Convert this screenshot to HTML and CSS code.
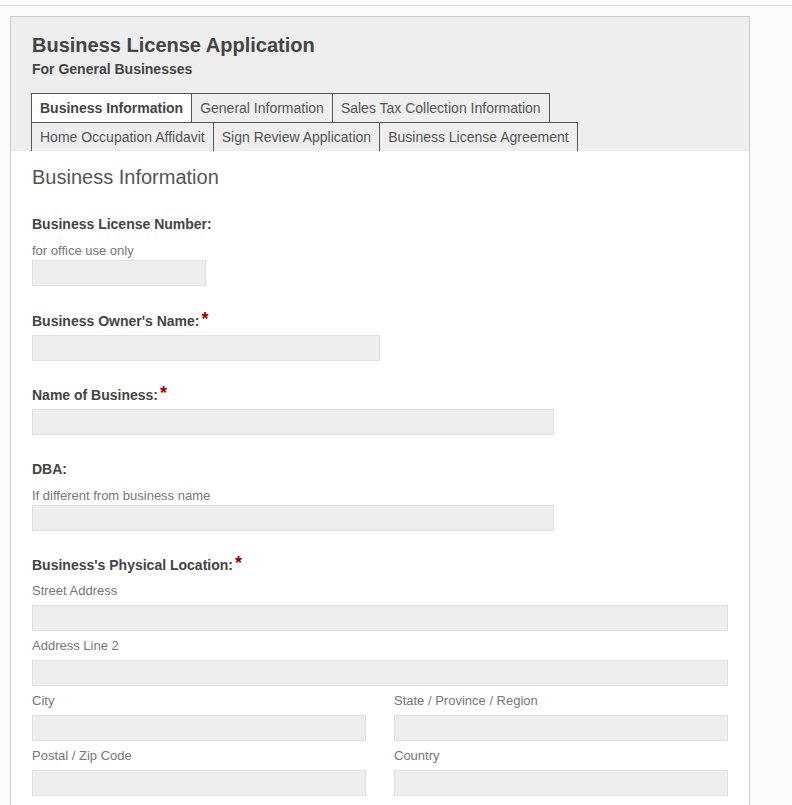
FILE: index.html
```html
<!DOCTYPE html>
<html lang="en">
<head>
<meta charset="utf-8">
<title>Business License Application</title>
<link rel="stylesheet" href="styles.css">
</head>
<body>
<div class="topbar"></div>
<div class="form-wrap">
  <div class="form-header">
    <h1 class="form-title">Business License Application</h1>
    <div class="form-subtitle">For General Businesses</div>
    <div class="tabs">
      <div class="tab-row">
        <span class="tab active">Business Information</span>
        <span class="tab">General Information</span>
        <span class="tab">Sales Tax Collection Information</span>
      </div>
      <div class="tab-row second">
        <span class="tab">Home Occupation Affidavit</span>
        <span class="tab">Sign Review Application</span>
        <span class="tab">Business License Agreement</span>
      </div>
    </div>
  </div>
  <div class="form-body">
    <h2 class="section-title">Business Information</h2>

    <div class="field">
      <div class="label">Business License Number:</div>
      <div class="desc">for office use only</div>
      <div class="input w25"></div>
    </div>

    <div class="field">
      <div class="label">Business Owner's Name:<span class="req">*</span></div>
      <div class="input w50"></div>
    </div>

    <div class="field">
      <div class="label">Name of Business:<span class="req">*</span></div>
      <div class="input w75"></div>
    </div>

    <div class="field">
      <div class="label">DBA:</div>
      <div class="desc">If different from business name</div>
      <div class="input w75"></div>
    </div>

    <div class="field address">
      <div class="label">Business's Physical Location:<span class="req">*</span></div>
      <div class="addr-grid">
        <div class="addr-item full">
          <div class="sub">Street Address</div>
          <div class="input"></div>
        </div>
        <div class="addr-item full">
          <div class="sub">Address Line 2</div>
          <div class="input"></div>
        </div>
        <div class="addr-item">
          <div class="sub">City</div>
          <div class="input"></div>
        </div>
        <div class="addr-item">
          <div class="sub">State / Province / Region</div>
          <div class="input"></div>
        </div>
        <div class="addr-item">
          <div class="sub">Postal / Zip Code</div>
          <div class="input"></div>
        </div>
        <div class="addr-item">
          <div class="sub">Country</div>
          <div class="input"></div>
        </div>
      </div>
    </div>
  </div>
</div>
</body>
</html>
```
FILE: styles.css
```css
html, body {
  margin: 0;
  padding: 0;
  background: #fbfbfb;
  font-family: "Liberation Sans", Arial, sans-serif;
  color: #444;
}

.topbar {
  height: 5px;
  border-bottom: 1px solid #dddddd;
  background: #fbfbfb;
}

.form-wrap {
  box-sizing: border-box;
  width: 740px;
  margin: 10px 0 0 10px;
  border: 1px solid #cccccc;
  border-bottom: none;
  background: #ffffff;
}

.form-header {
  background: #eeeeee;
  padding: 16px 21px 0 20px;
}

.form-title {
  margin: 0 0 0 1px;
  font-size: 20px;
  line-height: 24px;
  font-weight: bold;
  color: #444;
}

.form-subtitle {
  margin: 3px 0 0 1px;
  font-size: 14px;
  line-height: 18px;
  font-weight: bold;
  color: #444;
}

.tabs {
  margin-top: 15px;
}

.tab-row {
  display: flex;
}

.tab-row.second {
  margin-top: -1px;
}

.tab {
  display: block;
  padding: 6px 8px;
  font-size: 14px;
  line-height: 16px;
  color: #555;
  border: 1px solid #555555;
  white-space: nowrap;
}

.tab + .tab {
  margin-left: -1px;
}

.tab.active {
  background: #ffffff;
  font-weight: bold;
  color: #444;
}

.tab-row.second .tab {
  border-bottom: none;
}

.form-body {
  padding: 14px 21px 40px 21px;
}

.section-title {
  margin: 0;
  font-size: 20px;
  line-height: 24px;
  font-weight: normal;
  color: #555;
}

.field {
  margin-bottom: 25px;
}

.section-title + .field {
  margin-top: 26px;
  margin-bottom: 26px;
}

.label {
  font-size: 14px;
  line-height: 18px;
  font-weight: bold;
  color: #444;
  margin-bottom: 5px;
}

.req {
  color: #990000;
  font-size: 18px;
  line-height: 10px;
  margin-left: 2px;
  vertical-align: 1px;
  font-weight: bold;
}

.desc {
  font-size: 13px;
  line-height: 18px;
  color: #777;
  margin: 9px 0 0 0;
}

.input {
  box-sizing: border-box;
  height: 26px;
  background: #eeeeee;
  border: 1px solid #e0e0e0;
}

.w25 { width: 174px; }
.w50 { width: 348px; }
.w75 { width: 522px; }

.address .label {
  margin-bottom: 8px;
}

.addr-grid {
  display: grid;
  grid-template-columns: 1fr 1fr;
  column-gap: 28px;
  row-gap: 6px;
}

.addr-item.full {
  grid-column: 1 / 3;
}

.sub {
  font-size: 13px;
  line-height: 18px;
  color: #777;
  margin-bottom: 5px;
}
```
